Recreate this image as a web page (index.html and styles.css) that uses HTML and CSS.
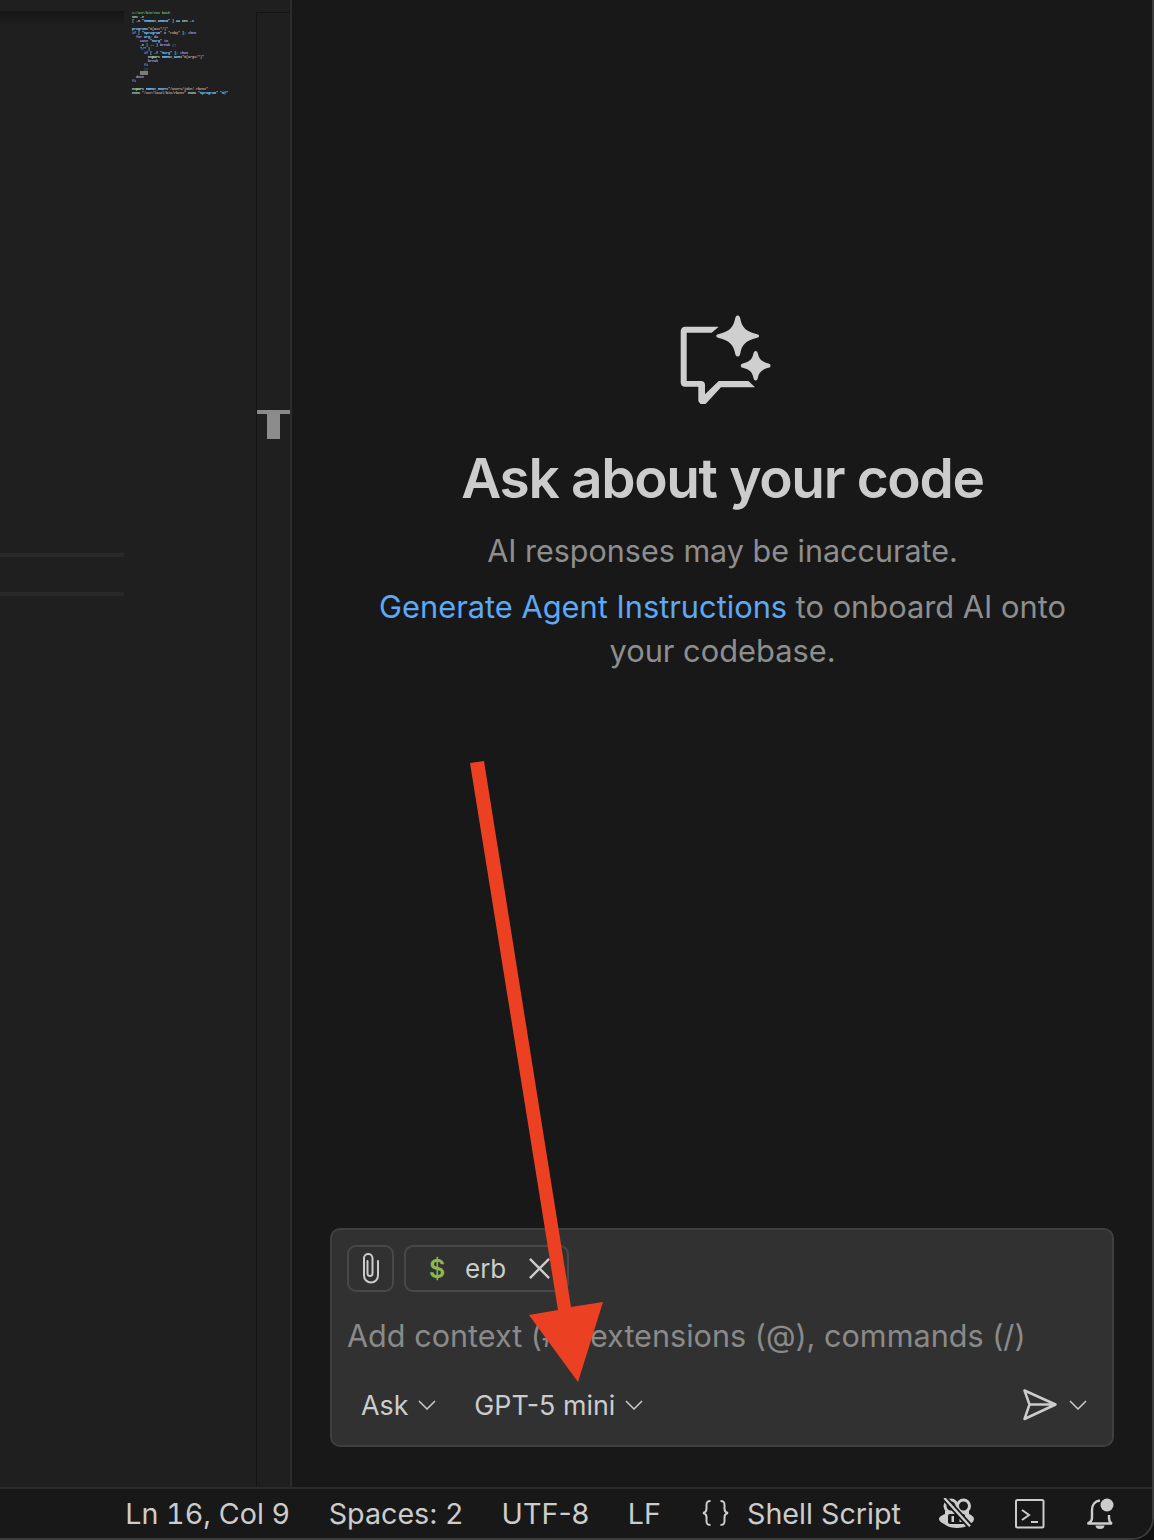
FILE: index.html
```html
<!DOCTYPE html>
<html lang="en">
<head>
<meta charset="utf-8">
<title>Chat</title>
<link rel="stylesheet" href="styles.css">
</head>
<body>
<div class="window">
  <div class="workbench">
    <div class="editor">
      <div class="scroll-shadow"></div>
      <div class="current-line"></div>
    </div>
    <div class="minimap"><span class="cm">#!/usr/bin/env bash</span>
<span class="fn">set</span> <span class="pl">-e</span>
<span class="pl">[ -n </span><span class="vr">"$RBENV_DEBUG"</span><span class="pl"> ] &amp;&amp; </span><span class="fn">set</span> <span class="vr">-x</span>

<span class="vr">program</span><span class="pl">=</span><span class="st">"${0##*/}"</span>
<span class="kw">if</span><span class="pl"> [ </span><span class="vr">"$program"</span><span class="pl"> = </span><span class="st">"ruby"</span><span class="pl"> ]; </span><span class="kw">then</span>
  <span class="kw">for</span> <span class="vr">arg</span><span class="pl">; </span><span class="kw">do</span>
    <span class="kw">case</span> <span class="vr">"$arg"</span> <span class="kw">in</span>
    <span class="pl">-e | -- ) </span><span class="kw">break</span><span class="pl"> ;;</span>
    <span class="pl">*/* )</span>
      <span class="kw">if</span><span class="pl"> [ -f </span><span class="vr">"$arg"</span><span class="pl"> ]; </span><span class="kw">then</span>
        <span class="fn">export</span> <span class="vr">RBENV_DIR</span><span class="pl">=</span><span class="st">"${arg%/*}"</span>
        <span class="kw">break</span>
      <span class="kw">fi</span>
      <span class="pl">;;</span>
    <span class="kw sel">esac</span>
  <span class="kw">done</span>
<span class="kw">fi</span>

<span class="fn">export</span> <span class="vr">RBENV_ROOT</span><span class="pl">=</span><span class="st">"/Users/jake/.rbenv"</span>
<span class="fn">exec</span> <span class="st">"/usr/local/bin/rbenv"</span> <span class="fn">exec</span> <span class="vr">"$program"</span> <span class="vr">"$@"</span></div>
    <div class="ruler">
      <div class="ruler-mark"></div>
      <div class="ruler-slider"></div>
    </div>
    <main class="chat">
      <section class="welcome">
        <svg class="welcome-icon" viewBox="20 14 92 90" aria-hidden="true">
          <path d="M58.7 26.7H25a4.300 4.300 0 0 0-4.300 4.300V82.700a4 4 0 0 0 4.300 4H38.300V100a4.600 4.600 0 0 0 7.700 3.400L61 87.300H95L88.400 81H58.700L45 94.300V85a4 4 0 0 0-3.400-4H26.700V32.700H51.700Z"/>
          <path d="M77.700 15.500C79.500 15.500 80 17 80.600 20 82.300 27.500 86 31.500 96.500 34 98.500 34.600 99 35 99 36 99 37 98.500 37.400 96.500 38 86 40.500 82.300 44.500 80.600 52 80 55 79.500 56.500 77.700 56.500 76 56.500 75.400 55 74.800 52 73 44.500 69.300 40.500 58.800 38 56.800 37.400 56.300 37 56.300 36 56.300 35 56.800 34.600 58.800 34 69.300 31.500 73 27.500 74.800 20 75.400 17 76 15.500 77.700 15.500Z"/>
          <path d="M95.700 51C97 51 97.500 52 98 54 99 59 101.500 61.500 108.500 63.500 110 64 110.500 64.600 110.500 65.700 110.500 66.700 110 67.300 108.500 67.800 101.500 69.700 99 72.300 98 77.300 97.500 79.500 97 80.500 95.700 80.500 94.400 80.500 93.800 79.500 93.300 77.300 92.300 72.300 89.800 69.700 82.800 67.800 81.300 67.300 80.800 66.700 80.800 65.700 80.800 64.600 81.300 64 82.800 63.500 89.800 61.500 92.300 59 93.300 54 93.800 52 94.400 51 95.700 51Z"/>
        </svg>
        <h1 class="welcome-title">Ask about your code</h1>
        <p class="welcome-note">AI responses may be inaccurate.</p>
        <p class="welcome-hint"><a class="link" href="#">Generate Agent Instructions</a> to onboard AI onto your codebase.</p>
      </section>
      <section class="input-box">
        <div class="context-row">
          <button class="attach" type="button" aria-label="Attach">
            <svg class="attach-icon" viewBox="0 0 16 31" aria-hidden="true"><path d="M15 8V22.500A7 7 0 0 1 1 22.500V5.200A4.200 4.200 0 0 1 9.500 5.200V20.500A2.500 2.500 0 0 1 4.500 20.500V8"/></svg>
          </button>
          <div class="chip">
            <span class="chip-dollar">$</span>
            <span class="chip-name">erb</span>
            <svg class="chip-close" viewBox="0 0 24 24" aria-hidden="true"><path d="M2 2 22 22M22 2 2 22"/></svg>
          </div>
        </div>
        <div class="placeholder">Add context (#), extensions (@), commands (/)</div>
        <div class="toolbar">
          <span class="tool tool-mode">Ask <svg class="chev" viewBox="0 0 18 10" aria-hidden="true"><path d="M1 1 9 9 17 1"/></svg></span>
          <span class="tool tool-model">GPT-5 mini <svg class="chev" viewBox="0 0 18 10" aria-hidden="true"><path d="M1 1 9 9 17 1"/></svg></span>
          <span class="tool-send">
            <svg class="send" viewBox="0 0 34 32" aria-hidden="true"><path d="M1.500 1.500 32.500 15.500 1.500 30 6.500 15.500ZM6.500 15.500H32.500"/></svg>
            <svg class="chev" viewBox="0 0 18 10" aria-hidden="true"><path d="M1 1 9 9 17 1"/></svg>
          </span>
        </div>
      </section>
    </main>
  </div>
  <footer class="status">
    <span class="cursor-pos">Ln 16, Col 9</span>
    <span>Spaces: 2</span>
    <span>UTF-8</span>
    <span>LF</span>
    <span class="lang">
      <svg class="braces" viewBox="0 0 27 26" aria-hidden="true"><path d="M8.500 1C5 1 4.500 2.500 4.500 5V9C4.500 11 3.500 12.500 1 13 3.500 13.500 4.500 15 4.500 17V21C4.500 23.500 5 25 8.500 25M18.500 1C22 1 22.500 2.500 22.500 5V9C22.500 11 23.500 12.500 26 13 23.500 13.500 22.500 15 22.500 17V21C22.500 23.500 22 25 18.500 25"/></svg>
      Shell Script
    </span>
    <svg class="st-icon st-copilot" viewBox="0 0 36 31" aria-hidden="true">
      <circle class="ring" cx="12" cy="8" r="6"/>
      <circle class="ring" cx="24.500" cy="8" r="6"/>
      <path class="solid" d="M6 13H30V16C33 17 35 19 35 21 35 23 33 25 31 26 27 29 22 30 18 30 14 30 9 29 5 26 3 25 0 23 0 21 0 19 3 17 6 16Z"/>
      <rect class="hole" x="9" y="16" width="17" height="10" rx="2"/>
      <rect class="solid" x="12.500" y="18" width="2.500" height="6"/>
      <rect class="solid" x="20.500" y="18" width="2.500" height="6"/>
      <path class="cut" d="M5.300 0 31 28.300"/>
      <path class="slash" d="M5.300 0 31 28.300"/>
    </svg>
    <svg class="st-icon st-term" viewBox="0 0 30 30" aria-hidden="true"><rect x="1" y="1" width="27.500" height="27.500" rx="1.500"/><path d="M7 11 14 16 7 21M16 23H23"/></svg>
    <svg class="st-icon st-bell" viewBox="0 0 30 32" aria-hidden="true">
      <path d="M14 2.500C9 3 6 7 6 12V20C6 23 4 24.500 1.500 25.500H26C24 24.500 23 23 23 20V17"/>
      <path class="solid" d="M9.500 27.500H18.500C18.500 30 16.500 31 14 31S9.500 30 9.500 27.500Z"/>
      <circle class="solid" cx="21" cy="7" r="6.500"/>
    </svg>
  </footer>
</div>
<svg class="arrow" viewBox="0 0 1154 1540" aria-hidden="true"><path d="M470 763 484 761 571 1307 603 1302 578 1382 529 1315 558 1310Z"/></svg>
</body>
</html>
```
FILE: styles.css
```css
* { box-sizing: border-box; }
html, body { margin: 0; padding: 0; background: #111; }
body { position: relative; width: 1154px; height: 1540px; overflow: hidden; font-family: Inter, "Liberation Sans", sans-serif; }
.window { display: flex; flex-direction: column; height: 1540px; background: #181818; border-right: 2px solid #3c3c3c; border-bottom: 2px solid #3c3c3c; border-bottom-right-radius: 22px; overflow: hidden; }
.workbench { display: flex; flex: 1; min-height: 0; }
.editor { width: 124px; background: #1f1f1f; padding-top: 11px; }
.scroll-shadow { height: 15px; background: linear-gradient(#151515, #1f1f1f); }
.current-line { height: 43px; margin-top: 527px; border-top: 4px solid #282828; border-bottom: 4px solid #282828; }
.minimap { width: 132px; background: #1f1f1f; padding: 11px 0 0 8px; font: 700 3.34px/4px "Liberation Mono", monospace; white-space: pre; color: #ddd; }
.cm { color: #7fb765; }
.fn { color: #f0f0bc; }
.pl { color: #d4d4d4; }
.vr { color: #9cd4f8; }
.st { color: #e0a284; }
.kw { color: #d896d2; }
.sel { background: #7d7d7d; color: #7d7d7d; }
.ruler { width: 36px; background: #1f1f1f; border-left: 1px solid #141414; border-right: 2px solid #2b2b2b; padding-top: 410px; position: relative; }
.ruler::before { content: ""; position: absolute; left: -1px; right: 0; top: 0; height: 12px; background: #1f1f1f; border-bottom: 1px solid #141414; }
.ruler-mark { height: 4px; background: #8a8a8a; }
.ruler-slider { width: 13px; height: 25px; margin-left: 10px; background: #8c8c8c; }
.chat { flex: 1; display: flex; flex-direction: column; padding: 314px 38px 40px 38px; background: #181818; }
.welcome { display: flex; flex-direction: column; align-items: center; text-align: center; padding-left: 1px; }
.welcome-icon { width: 92px; height: 90px; margin-left: 6px; fill: #cfcfcf; display: block; }
.welcome-title { margin: 42px 0 0; font-size: 55px; line-height: 64px; font-weight: 600; color: #cccccc; letter-spacing: -1.350px; }
.welcome-note { margin: 19px 0 0; font-size: 30.500px; line-height: 44px; color: #8e8e8e; }
.welcome-hint { margin: 12px 0 0; width: 720px; font-size: 30.800px; line-height: 44px; color: #8e8e8e; }
.link { color: #5ea8f5; text-decoration: none; }
.input-box { margin-top: auto; height: 219px; background: #313131; border: 2px solid #3f3f3f; border-radius: 10px; padding: 15px 25px 0 15px; display: flex; flex-direction: column; }
.context-row { display: flex; gap: 10px; }
.attach { width: 47px; height: 47px; padding: 0; background: transparent; border: 2px solid #484848; border-radius: 9px; display: flex; align-items: center; justify-content: center; }
.attach-icon { width: 16px; height: 31px; fill: none; stroke: #cccccc; stroke-width: 2; stroke-linecap: round; }
.chip { width: 165px; height: 47px; border: 2px solid #484848; border-radius: 9px; display: flex; align-items: center; padding-left: 23px; font-size: 26px; color: #cccccc; }
.chip-dollar { color: #8fb84c; font-weight: 600; font-size: 25px; width: 36px; }
.chip-name { width: 63px; }
.chip-close { width: 23px; height: 23px; fill: none; stroke: #cccccc; stroke-width: 2.500; }
.placeholder { margin-top: 22px; font-size: 30.600px; line-height: 44px; color: #8a8a8a; white-space: nowrap; }
.toolbar { display: flex; align-items: center; margin-top: 25px; padding-left: 14px; font-size: 26.800px; line-height: 44px; color: #cccccc; }
.tool { display: flex; align-items: center; gap: 10px; white-space: nowrap; }
.tool-model { margin-left: 38px; }
.tool-send { margin-left: auto; display: flex; align-items: center; gap: 12px; }
.chev { width: 18px; height: 10px; fill: none; stroke: #cccccc; stroke-width: 1.500; display: block; }
.send { width: 34px; height: 32px; fill: none; stroke: #cccccc; stroke-width: 2.500; stroke-linejoin: round; display: block; }
.status { height: 51px; flex: none; display: flex; align-items: center; justify-content: flex-end; gap: 38.500px; padding-right: 36px; border-top: 2px solid #2b2b2b; background: #181818; font-size: 28.700px; color: #cccccc; white-space: nowrap; }
.cursor-pos { font-variant-numeric: tabular-nums; }
.lang { display: flex; align-items: center; gap: 18px; margin-left: 2.500px; }
.braces { width: 27px; height: 26px; fill: none; stroke: #cccccc; stroke-width: 2; display: block; flex: none; margin-top: -2px; }
.st-icon { display: block; flex: none; }
.st-copilot { width: 36px; height: 31px; margin-left: -0.500px; }
.st-copilot .ring { fill: none; stroke: #cccccc; stroke-width: 3; }
.st-copilot .solid { fill: #cccccc; }
.st-copilot .hole { fill: #181818; }
.st-copilot .cut { stroke: #181818; stroke-width: 6; fill: none; }
.st-copilot .slash { stroke: #cccccc; stroke-width: 2.400; fill: none; }
.st-term { width: 30px; height: 30px; margin-left: 1.500px; margin-right: 2.500px; fill: none; stroke: #cccccc; stroke-width: 2; }
.st-bell { width: 30px; height: 32px; fill: none; stroke: #cccccc; stroke-width: 2.400; }
.st-bell .solid { fill: #cccccc; stroke: none; }
.arrow { position: absolute; left: 0; top: 0; width: 1154px; height: 1540px; fill: #ec4023; pointer-events: none; }
```
